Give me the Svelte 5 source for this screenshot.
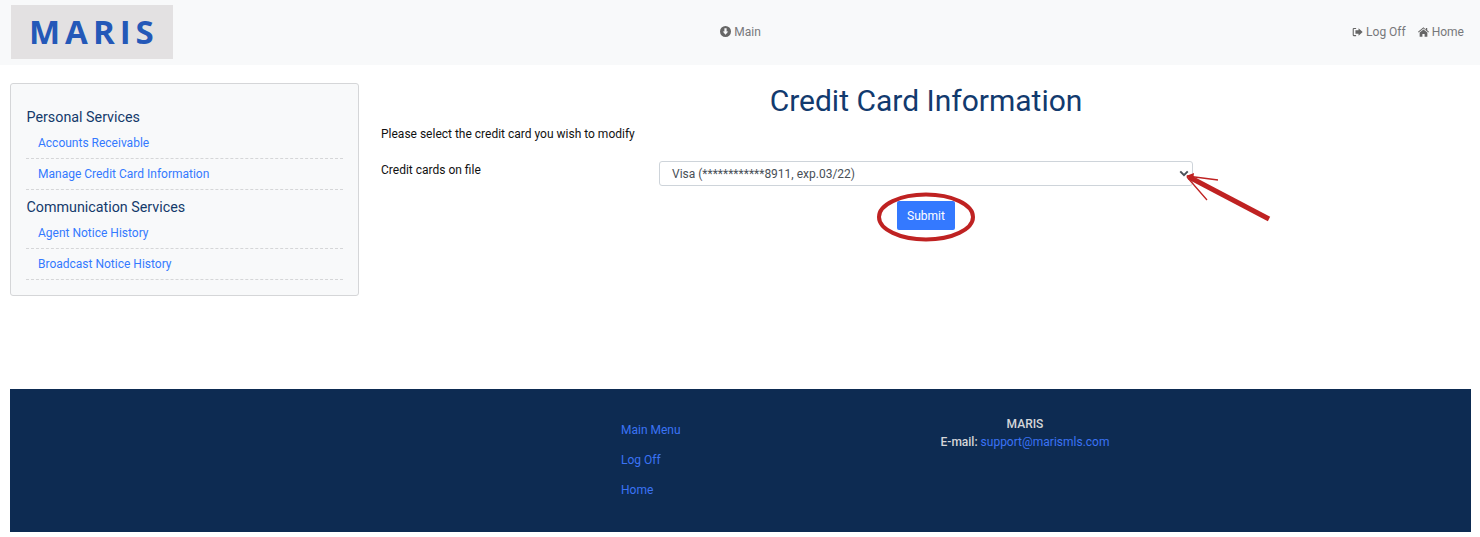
<script>
  const personal = ['Accounts Receivable', 'Manage Credit Card Information'];
  const communication = ['Agent Notice History', 'Broadcast Notice History'];
  const footerLinks = ['Main Menu', 'Log Off', 'Home'];
</script>

<div class="page">
  <header class="topbar">
    <div class="logo"><span>MARIS</span></div>
    <nav class="center-nav">
      <a href="#main">
        <svg viewBox="0 0 16 16" width="11" height="11"><path fill-rule="evenodd" d="M8 0a8 8 0 1 0 0 16A8 8 0 0 0 8 0zM6.400 3.200h3.200V8H12l-4 4.600L4 8h2.400z" /></svg>
        Main
      </a>
    </nav>
    <nav class="right-nav">
      <a href="#logoff">
        <svg viewBox="0 0 16 14" width="11" height="10"><path d="M6 1H2.500A1.500 1.500 0 0 0 1 2.500v9A1.500 1.500 0 0 0 2.500 13H6v-1.600H2.600V2.600H6z" /><path d="M9.500 1.500 15.500 7l-6 5.500V9.500H5v-5h4.500z" /></svg>
        Log Off
      </a>
      <a href="#home">
        <svg viewBox="0 0 16 14" width="11" height="10"><path d="M8 0 0 6.800l.9 1L8 1.900l7.100 5.900.9-1-2.600-2.200V1h-2v2.900z" /><path d="M8 3.200 2.400 7.900V14h4v-4h3.200v4h4V7.900z" /></svg>
        Home
      </a>
    </nav>
  </header>

  <div class="content">
    <aside class="sidebar">
      <h3>Personal Services</h3>
      <ul>
        {#each personal as item}
          <li><a href="#item">{item}</a></li>
        {/each}
      </ul>
      <h3>Communication Services</h3>
      <ul>
        {#each communication as item}
          <li><a href="#item">{item}</a></li>
        {/each}
      </ul>
    </aside>

    <main class="main">
      <h1>Credit Card Information</h1>
      <p class="lead">Please select the credit card you wish to modify</p>
      <div class="field">
        <label for="card">Credit cards on file</label>
        <div class="select" id="card">
          <span>Visa (************8911, exp.03/22)</span>
          <svg viewBox="0 0 12 8" width="10" height="7"><path d="M1.500 1.500 6 6l4.500-4.500" fill="none" stroke="#4a5058" stroke-width="2.400" /></svg>
        </div>
      </div>
      <div class="actions">
        <button type="button">Submit</button>
      </div>
    </main>
  </div>

  <footer class="footer">
    <ul class="footer-links">
      {#each footerLinks as link}
        <li><a href="#link">{link}</a></li>
      {/each}
    </ul>
    <div class="contact">
      <div>MARIS</div>
      <div>E-mail: <a href="#mail">support@marismls.com</a></div>
    </div>
  </footer>

  <!-- hand drawn markup that sits on top of the screenshot -->
  <svg class="markup" viewBox="0 0 1480 537" width="1480" height="537">
    <ellipse cx="926" cy="217" rx="47" ry="22.500" fill="none" stroke="#bf2222" stroke-width="4" />
    <path d="M1269 219 1189 177" stroke="#bf2222" stroke-width="5" fill="none" />
    <path d="M1186 176 1194 173 1193 181z" fill="#bf2222" />
    <path d="M1187 176 1218 180M1187 177 1207 200" stroke="#bf2222" stroke-width="1.300" fill="none" />
  </svg>
</div>

<style>
  :global(body) {
    margin: 0;
    background: #fff;
    font-family: Roboto, "Liberation Sans", sans-serif;
    font-size: 12px;
    color: #212529;
  }

  a {
    color: #3479ff;
    text-decoration: none;
  }

  ul {
    list-style: none;
    margin: 0;
    padding: 0;
  }

  .page {
    position: relative;
    width: 1480px;
    height: 537px;
    overflow: hidden;
  }

  .topbar {
    display: grid;
    grid-template-columns: 1fr auto 1fr;
    align-items: center;
    height: 65px;
    padding: 0 16px 1px 11px;
    box-sizing: border-box;
    background: #f8f9fa;
  }

  .logo {
    display: flex;
    align-items: center;
    width: 162px;
    height: 54px;
    padding: 0 0 2px 18px;
    box-sizing: border-box;
    background: #e3e1e2;
    color: #2458b8;
    font-family: "Open Sans", sans-serif;
    font-size: 33px;
    font-weight: 700;
    letter-spacing: 5px;
  }

  .center-nav {
    margin-left: 6px;
  }

  .center-nav a,
  .right-nav a {
    color: #77787a;
    font-size: 12px;
  }

  .center-nav svg,
  .right-nav svg {
    fill: #666;
    vertical-align: -1px;
  }

  .right-nav {
    display: flex;
    justify-content: flex-end;
    gap: 12px;
  }

  .content {
    display: flex;
    gap: 22px;
    padding: 18px 9px 0 10px;
    height: 324px;
    box-sizing: border-box;
  }

  .sidebar {
    width: 349px;
    height: 213px;
    padding: 24px 15px 0;
    box-sizing: border-box;
    background: #f8f9fa;
    border: 1px solid #d5d6d8;
    border-radius: 3px;
  }

  h3 {
    margin: 0 0 2px 0.500px;
    font-size: 14.300px;
    font-weight: 400;
    line-height: 18px;
    color: #143a6b;
  }

  .sidebar ul {
    margin-bottom: 8px;
  }

  .sidebar li {
    height: 31px;
    padding: 8px 0 0 12px;
    box-sizing: border-box;
    border-bottom: 1px dashed #d5d6d8;
    line-height: 14px;
  }

  .main {
    flex: 1;
  }

  h1 {
    margin: 0;
    height: 36px;
    font-size: 30px;
    font-weight: 400;
    line-height: 36px;
    text-align: center;
    color: #123a6e;
  }

  .lead {
    margin: 8px 0 0;
    line-height: 14px;
    color: #111;
  }

  .field {
    display: flex;
    margin-top: 20px;
  }

  .field label {
    width: 278px;
    line-height: 18px;
    color: #111;
  }

  .select {
    display: flex;
    align-items: center;
    justify-content: space-between;
    width: 534px;
    height: 25px;
    padding: 0 3px 0 12px;
    box-sizing: border-box;
    border: 1px solid #ced4da;
    border-radius: 3px;
    background: #fff;
    color: #495057;
  }

  .actions {
    display: flex;
    justify-content: center;
    margin-top: 15px;
  }

  button {
    width: 58px;
    height: 29px;
    padding: 0;
    border: none;
    border-radius: 2px;
    background: #3479ff;
    color: #fff;
    font: 400 12px Roboto, sans-serif;
  }

  .footer {
    display: flex;
    width: 1461px;
    height: 143px;
    margin-left: 10px;
    background: #0d2b52;
  }

  .footer-links {
    margin-left: 611px;
    padding-top: 26px;
    width: 240px;
  }

  .footer-links li {
    height: 30px;
    line-height: 30px;
  }

  .footer a {
    color: #3b73f5;
  }

  .contact {
    width: 328px;
    padding-top: 26px;
    text-align: center;
    line-height: 18px;
    font-weight: 500;
    color: #d5d6d8;
  }

  .contact a {
    font-weight: 400;
  }

  .markup {
    position: absolute;
    left: 0;
    top: 0;
    pointer-events: none;
  }
</style>
